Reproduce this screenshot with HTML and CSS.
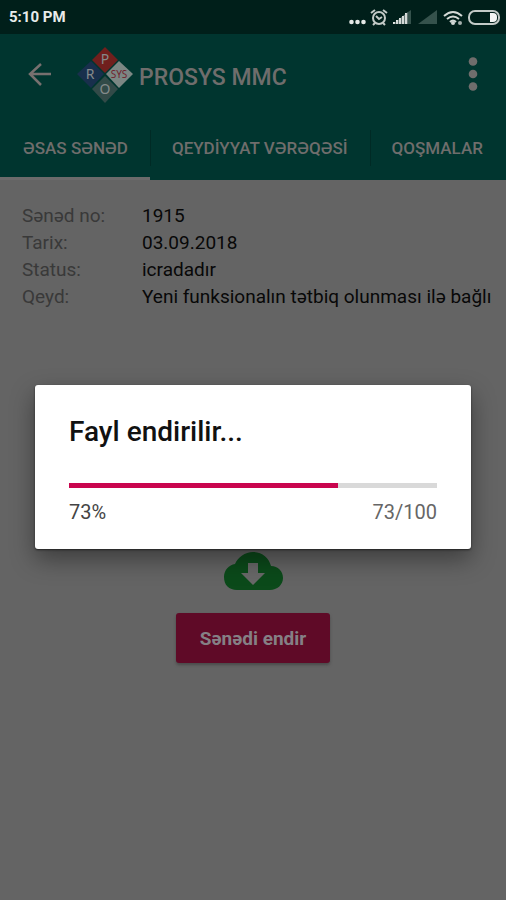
FILE: index.html
```html
<!DOCTYPE html>
<html lang="az">
<head>
<meta charset="utf-8">
<meta name="viewport" content="width=device-width, initial-scale=1">
<title>PROSYS MMC</title>
<link rel="stylesheet" href="styles.css">
</head>
<body>
<div class="status">
  <span class="clock">5:10 PM</span>
  <svg class="status-icons" width="152" height="20" viewBox="0 0 152 20" aria-hidden="true">
    <g fill="#e4e8e6">
      <circle cx="2.500" cy="15" r="2.300"/><circle cx="8.500" cy="15" r="2.300"/><circle cx="14.500" cy="15" r="2.300"/>
    </g>
    <g fill="none" stroke="#c3cac7" stroke-width="2">
      <circle cx="30" cy="11" r="6"/>
      <path d="M22 6l4-3M38 6l-4-3M27 9l3 3l3-2M26 16l-2 2M34 16l2 2"/>
    </g>
    <path d="M44 17v-2h2v2zM47 17v-4h2v4zM50 17v-6h2v6zM53 17V9h2v8zM56 17V6h2v11z" fill="#e4e8e6"/>
    <path d="M44 17l15-12v12z" fill="#c3cac7" opacity=".5"/>
    <path d="M59 5l3-2v14h-3z" fill="#35524c"/>
    <path d="M69 17L88 3v14z" fill="#35524c"/>
    <g fill="none" stroke="#d3d9d6" stroke-width="2">
      <path d="M95 9q9-8 18 0M98 12q6-5 12 0M101 15q3-3 6 0"/>
    </g>
    <circle cx="104" cy="16" r="2" fill="#d3d9d6"/>
    <circle cx="111" cy="16" r="2" fill="#a5afac"/>
    <rect x="120" y="4" width="30" height="13" rx="6" fill="none" stroke="#c3cac7" stroke-width="2"/>
    <path d="M141 6h3q4 0 4 4v1q0 4-4 4h-3z" fill="#f4f6f5"/>
  </svg>
</div>
<header class="header">
  <div class="bar">
    <button class="icon-btn" aria-label="Geri">
      <svg width="24" height="24" viewBox="0 0 24 24" fill="none" stroke="#77706f" stroke-width="2.500"><path d="M23 11H2M13 1L2 11l11 11"/></svg>
    </button>
    <svg class="logo" width="56" height="58" viewBox="0 0 56 58" role="img" aria-label="PROSYS">
      <path d="M28 1l13 13l-13 13l-13-13z" fill="#701f1d"/>
      <path d="M14 15l13 13l-13 14L0 28z" fill="#182f4c"/>
      <path d="M42 15l14 13l-14 14l-13-14z" fill="#7c8784"/>
      <path d="M28 30l13 13l-13 14l-13-14z" fill="#324a48"/>
      <g class="logo-text" text-anchor="middle">
        <text x="28" y="18">P</text><text x="13" y="33">R</text><text x="28" y="48">O</text>
        <text class="logo-sys" x="42" y="32">SYS</text>
      </g>
    </svg>
    <h1 class="title">PROSYS MMC</h1>
    <button class="icon-btn more" aria-label="Menyu">
      <svg width="10" height="36" viewBox="0 0 10 36" fill="#6f6d6c"><circle cx="5" cy="4.500" r="4.300"/><circle cx="5" cy="17" r="4.300"/><circle cx="5" cy="29.500" r="4.300"/></svg>
    </button>
  </div>
  <nav class="tabs">
    <a class="tab active" href="#sened">ƏSAS SƏNƏD</a>
    <a class="tab" href="#qeydiyyat">QEYDİYYAT VƏRƏQƏSİ</a>
    <a class="tab" href="#qosmalar">QOŞMALAR</a>
  </nav>
</header>
<main class="content" id="sened">
  <dl class="details">
    <dt>Sənəd no:</dt><dd>1915</dd>
    <dt>Tarix:</dt><dd>03.09.2018</dd>
    <dt>Status:</dt><dd>icradadır</dd>
    <dt>Qeyd:</dt><dd>Yeni funksionalın tətbiq olunması ilə bağlı</dd>
  </dl>
  <div class="download">
    <svg width="60" height="40" viewBox="0 0 60 40" aria-hidden="true">
      <path d="M14 39C6 39 1 34 1 26C1 19 6 14 12 13C15 6 22 1 30 1C39 1 46 7 48 15C55 15 60 20 60 27C60 34 54 39 47 39z" fill="#0b4a1a"/>
      <path d="M25 12h10v10h7L30 34L18 22h7z" fill="#686868"/>
    </svg>
    <button class="download-btn">Sənədi endir</button>
  </div>
</main>
<div class="overlay">
  <section class="dialog" role="dialog" aria-labelledby="dialog-title">
    <h2 class="dialog-title" id="dialog-title">Fayl endirilir...</h2>
    <progress class="progress" value="73" max="100" aria-labelledby="dialog-title"></progress>
    <div class="counts"><span class="percent">73%</span><span>73/100</span></div>
  </section>
</div>
</body>
</html>
```
FILE: styles.css
```css
* { box-sizing: border-box; }

body {
  margin: 0;
  min-height: 100vh;
  background: #646464;
  font-family: Roboto, "Noto Sans", sans-serif;
  overflow-x: hidden;
}

button { border: 0; padding: 0; background: none; font: inherit; }

.status {
  display: flex;
  align-items: center;
  justify-content: space-between;
  height: 34px;
  padding: 0 5px 0 9px;
  background: #001f1a;
}

.clock { color: #e8ecea; font-size: 15px; font-weight: 700; }

.header { background: #00352f; color: #6f6d6c; }

.bar {
  display: flex;
  align-items: center;
  height: 82px;
  padding: 0 28px;
}

.icon-btn { display: flex; }
.logo { margin-left: 25px; }
.logo-text { fill: #858a8b; font-family: "Noto Sans", sans-serif; font-size: 14px; }
.logo-sys { fill: #701f2d; font-size: 10px; }
.title { margin: 4px 0 0 6px; font-size: 23px; font-weight: 500; }
.more { margin-left: auto; }

.tabs { display: flex; height: 64px; }

.tab {
  position: relative;
  display: flex;
  flex: none;
  align-items: center;
  padding: 0 22px;
  color: inherit;
  font-size: 17px;
  font-weight: 500;
  text-decoration: none;
  white-space: nowrap;
}

.tab + .tab::before {
  content: "";
  position: absolute;
  left: 0;
  top: 14px;
  bottom: 14px;
  width: 1px;
  background: #002a25;
}

.tab.active {
  padding-left: 23px;
  border-top: 3px solid transparent;
  border-bottom: 3px solid #6b6b6b;
}

.details {
  display: grid;
  grid-template-columns: 120px 1fr;
  margin: 0;
  padding: 22px 0 0 22px;
  font-size: 19px;
  line-height: 27px;
  white-space: nowrap;
}

.details dt { color: #393939; }
.details dd { margin: 0; color: #080808; }

.download {
  display: flex;
  flex-direction: column;
  align-items: center;
  gap: 22px;
  margin-top: 241px;
}

.download-btn {
  height: 50px;
  padding: 0 24px;
  border-radius: 3px;
  background: #5f0a27;
  box-shadow: 0 2px 3px #4a4a4a;
  color: #858085;
  font-size: 19px;
  font-weight: 700;
}

.overlay {
  position: absolute;
  inset: 34px 0 0;
  display: flex;
  align-items: center;
  padding: 0 35px;
}

.dialog {
  width: 100%;
  padding: 29px 34px 23px;
  border-radius: 3px;
  background: #fff;
  box-shadow: 0 1px 2px #222, 0 10px 24px rgba(0, 0, 0, 0.4);
}

.dialog-title {
  margin: 0;
  color: #111;
  font-size: 28px;
  font-weight: 500;
  line-height: 36px;
}

.progress {
  display: block;
  width: 100%;
  height: 5px;
  margin: 33px 0 10px;
  border: 0;
  background: #d9d9d9;
  appearance: none;
}

.progress::-webkit-progress-bar { background: #d9d9d9; }
.progress::-webkit-progress-value { background: #c9054e; }

.counts {
  display: flex;
  justify-content: space-between;
  color: #666;
  font-size: 20px;
  line-height: 28px;
}

.percent { color: #444; }
```
